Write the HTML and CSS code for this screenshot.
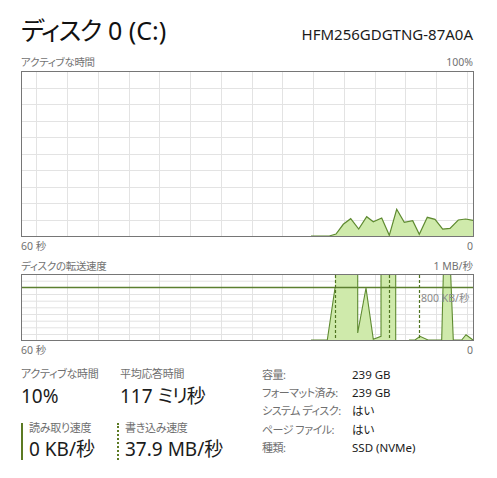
FILE: index.html
```html
<!DOCTYPE html>
<html lang="ja">
<head>
<meta charset="utf-8">
<title>ディスク 0 (C:)</title>
<link rel="stylesheet" href="styles.css">
</head>
<body>
<div class="page">
  <header class="head">
    <h1 class="title"><span class="kana">ディスク</span> 0 (C:)</h1>
    <div class="model">HFM256GDGTNG-87A0A</div>
  </header>

  <div class="axis first"><span class="jp">アクティブな時間</span><span>100%</span></div>
  <div class="chart c1">
    <svg width="453" height="166" viewBox="0 0 453 166">
      <rect x="0" y="0" width="453" height="166" fill="#fff"/>
      <g stroke="#e3e3e3" stroke-width="1">
        <path d="M15.5 1V165M46.5 1V165M77.5 1V165M108.5 1V165M138.5 1V165M169.5 1V165M200.5 1V165M231.5 1V165M261.5 1V165M292.5 1V165M323.5 1V165M354.5 1V165M384.5 1V165M415.5 1V165M446.5 1V165"/>
        <path d="M1 17.5H452M1 33.5H452M1 50.5H452M1 66.5H452M1 83.5H452M1 99.5H452M1 116.5H452M1 132.5H452M1 149.5H452"/>
      </g>
      <polygon fill="#cfeaab" points="308.3,165 315,163 322.3,153.3 329.7,147.7 337.7,158 345.7,145.7 352.3,150.7 360.7,147 368.3,164.3 375.7,138.3 383.3,151.3 391.7,149.7 398.3,163.3 406.3,146.3 414,148.3 421.7,158 429,157.3 437.3,149 444.7,148 452,149.3 452,165"/>
      <polyline fill="none" stroke="#5e8a30" stroke-width="1.2" points="290,165 308.3,165 315,163 322.3,153.3 329.7,147.7 337.7,158 345.7,145.7 352.3,150.7 360.7,147 368.3,164.3 375.7,138.3 383.3,151.3 391.7,149.7 398.3,163.3 406.3,146.3 414,148.3 421.7,158 429,157.3 437.3,149 444.7,148 452,149.3"/>
      <rect x="0.5" y="0.5" width="452" height="165" fill="none" stroke="#767676"/>
    </svg>
  </div>
  <div class="axis"><span>60 秒</span><span>0</span></div>

  <div class="axis second"><span class="jp">ディスクの転送速度</span><span>1 MB/秒</span></div>
  <div class="chart c2">
    <svg width="453" height="67" viewBox="0 0 453 67">
      <rect x="0" y="0" width="453" height="67" fill="#fff"/>
      <g stroke="#e3e3e3" stroke-width="1">
        <path d="M15.5 1V66M46.5 1V66M77.5 1V66M108.5 1V66M138.5 1V66M169.5 1V66M200.5 1V66M231.5 1V66M261.5 1V66M292.5 1V66M323.5 1V66M354.5 1V66M384.5 1V66M415.5 1V66M446.5 1V66"/>
        <path d="M1 7.2H452M1 20.5H452M1 27.2H452M1 33.8H452M1 40.5H452M1 47.2H452M1 53.8H452M1 60.5H452"/>
      </g>
      <g fill="#cfeaab">
        <polygon points="306.3,66 314,14 314,1 336.7,1 336.7,59 345,14 352.3,65.3 360,62.3 360,1 374.7,1 374.7,66"/>
        <polygon points="394,66 399,62.3 407,66"/>
        <polygon points="420.7,66 422.3,1 429.7,1 432.3,66"/>
        <polygon points="440.7,66 445,60.7 452,66"/>
      </g>
      <path d="M1 13.5H452" stroke="#5c8030" stroke-width="1.3"/>
      <g fill="none" stroke="#5e8a30" stroke-width="1.1">
        <polyline points="290,66 306.3,66 314,14"/>
        <path d="M336.7 1V59L345 14L352.3 65.3L360 62.3V1"/>
        <path d="M374.7 1V66"/>
        <polyline points="388,66 394,66 399,62.3 407,66 420.7,66 422.3,1"/>
        <polyline points="429.7,1 432.3,66 440.7,66 445,60.7 452,66"/>
      </g>
      <g fill="none" stroke="#4f7420" stroke-width="1.2" stroke-dasharray="3 2">
        <path d="M314.5 1V66"/>
        <path d="M368.5 1V66"/>
        <path d="M398.5 1V66"/>
      </g>
      <rect x="0.5" y="0.5" width="452" height="66" fill="none" stroke="#767676"/>
    </svg>
    <span class="mark">800 KB/秒</span>
  </div>
  <div class="axis"><span>60 秒</span><span>0</span></div>

  <section class="stats">
    <div class="metrics">
      <div class="metric">
        <div class="label">アクティブな時間</div>
        <div class="value">10%</div>
      </div>
      <div class="metric">
        <div class="label">平均応答時間</div>
        <div class="value">117 <span class="kana-sm">ミリ秒</span></div>
      </div>
      <div class="metric rate read">
        <div class="label">読み取り速度</div>
        <div class="value">0 KB/秒</div>
      </div>
      <div class="metric rate write">
        <div class="label">書き込み速度</div>
        <div class="value">37.9 MB/秒</div>
      </div>
    </div>
    <dl class="props">
      <dt>容量:</dt><dd>239 GB</dd>
      <dt>フォーマット済み:</dt><dd>239 GB</dd>
      <dt>システム ディスク:</dt><dd>はい</dd>
      <dt>ページ ファイル:</dt><dd>はい</dd>
      <dt>種類:</dt><dd>SSD (NVMe)</dd>
    </dl>
  </section>
</div>
</body>
</html>
```

FILE: styles.css
```css
html, body {
  margin: 0;
  padding: 0;
  background: #ffffff;
}

body {
  font-family: "Noto Sans", "Noto Sans CJK JP", sans-serif;
  font-feature-settings: "palt";
  color: #1b1b1b;
}

.page {
  width: 452px;
  padding: 0 24px 0 21px;
  display: flex;
  flex-direction: column;
}

.head {
  height: 55px;
  display: flex;
  justify-content: space-between;
  align-items: baseline;
  box-sizing: border-box;
  padding-top: 13px;
}

.title {
  margin: 0;
  font-size: 25px;
  font-weight: 400;
  line-height: 34px;
  color: #111;
  white-space: nowrap;
}

.kana {
  letter-spacing: -1.6px;
  margin-right: 1px;
}

.model {
  font-size: 15px;
  line-height: 20px;
  color: #1b1b1b;
}

.axis {
  display: flex;
  justify-content: space-between;
  height: 14px;
  font-size: 10.5px;
  line-height: 14px;
  color: #727272;
  margin-top: 2px;
  white-space: nowrap;
}

.axis .jp {
  letter-spacing: -0.3px;
}

.axis.first {
  margin-top: 0;
}

.axis.second {
  margin-top: 6px;
}

.chart {
  position: relative;
  margin-top: 2px;
  width: 453px;
  line-height: 0;
}

.c2 {
  margin-top: 1px;
}

.chart svg {
  display: block;
}

.mark {
  position: absolute;
  left: 400px;
  top: 17px;
  font-size: 10.5px;
  line-height: 14px;
  color: #8a8a8a;
  white-space: nowrap;
}

.stats {
  display: flex;
  margin-top: 9px;
}

.metrics {
  width: 241px;
  display: grid;
  grid-template-columns: 99px auto;
  row-gap: 15px;
  align-items: start;
}

.label {
  font-size: 11px;
  line-height: 16px;
  letter-spacing: -0.3px;
  color: #6f6f6f;
  white-space: nowrap;
}

.value {
  font-size: 19px;
  line-height: 24px;
  color: #1b1b1b;
  margin-top: 2px;
  white-space: nowrap;
}

.kana-sm {
  letter-spacing: -1px;
}

.rate {
  padding-left: 6px;
  border-left: 2px solid #5c7a23;
}

.rate .label {
  line-height: 10px;
}

.rate .value {
  margin-top: 5px;
  line-height: 22px;
}

.write {
  margin-left: -3px;
  border-left: 2px dotted #5c7a23;
}

.props {
  margin: 0;
  display: grid;
  grid-template-columns: 90px auto;
  grid-auto-rows: 18.2px;
  font-size: 11px;
  line-height: 18.2px;
  white-space: nowrap;
}

.props dt {
  color: #6f6f6f;
  letter-spacing: -0.5px;
}

.props dd {
  margin: 0;
  color: #1b1b1b;
  font-size: 11.5px;
}
```
